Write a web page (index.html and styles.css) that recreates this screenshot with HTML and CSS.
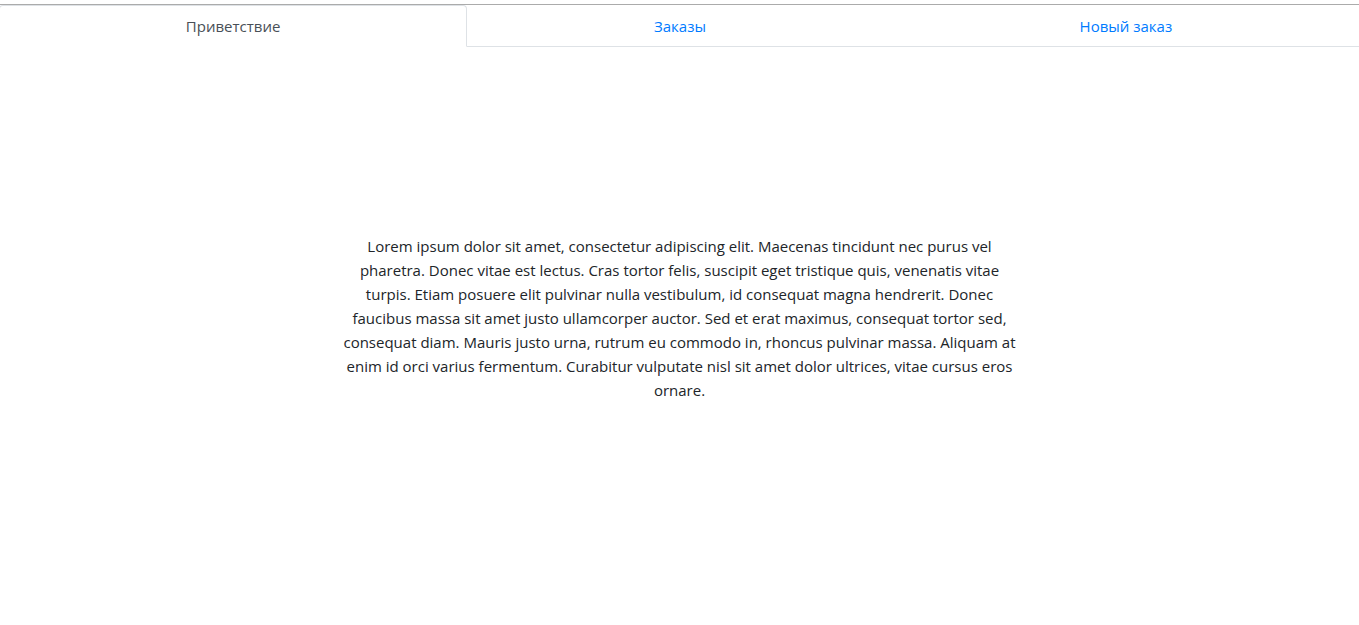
FILE: index.html
```html
<!DOCTYPE html>
<html lang="ru">
<head>
<meta charset="utf-8">
<title>Приветствие</title>
<link rel="stylesheet" href="styles.css">
</head>
<body>
<div class="page">
  <div class="rule"></div>
  <ul class="tabs">
    <li class="tab"><a class="tab-link active" href="#">Приветствие</a></li>
    <li class="tab"><a class="tab-link" href="#">Заказы</a></li>
    <li class="tab"><a class="tab-link" href="#">Новый заказ</a></li>
  </ul>
  <main class="content">
    <p class="intro">Lorem ipsum dolor sit amet, consectetur adipiscing elit. Maecenas tincidunt nec purus vel pharetra. Donec vitae est lectus. Cras tortor felis, suscipit eget tristique quis, venenatis vitae turpis. Etiam posuere elit pulvinar nulla vestibulum, id consequat magna hendrerit. Donec faucibus massa sit amet justo ullamcorper auctor. Sed et erat maximus, consequat tortor sed, consequat diam. Mauris justo urna, rutrum eu commodo in, rhoncus pulvinar massa. Aliquam at enim id orci varius fermentum. Curabitur vulputate nisl sit amet dolor ultrices, vitae cursus eros ornare.</p>
  </main>
</div>
</body>
</html>
```

FILE: styles.css
```css
html, body {
  margin: 0;
  padding: 0;
  background: #fff;
}
body {
  font-family: "Open Sans", "Noto Sans", sans-serif;
  font-size: 15px;
  line-height: 24px;
  color: #212529;
  overflow: hidden;
}
.page {
  padding-top: 4px;
}
.rule {
  border-top: 1px solid #ababab;
}
.tabs {
  display: flex;
  list-style: none;
  margin: 0 0 0 -1px;
  padding: 0;
  border-bottom: 1px solid #dee2e6;
}
.tab {
  flex: 1 1 auto;
  margin-bottom: -1px;
}
.tab-link {
  display: block;
  text-align: center;
  padding: 8px 16px;
  border: 1px solid transparent;
  border-top-left-radius: 4px;
  border-top-right-radius: 4px;
  color: #007bff;
  text-decoration: none;
}
.tab-link.active {
  color: #495057;
  background: #fff;
  border-color: #dee2e6 #dee2e6 #fff;
}
.content {
  display: flex;
  justify-content: center;
  padding-top: 187px;
}
.intro {
  margin: 0;
  width: 680px;
  text-align: center;
}
```
